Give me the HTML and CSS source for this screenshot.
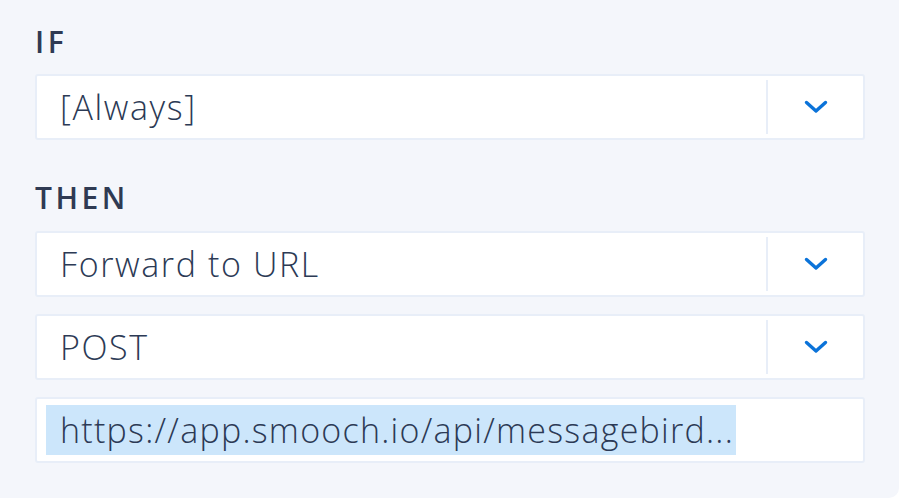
FILE: index.html
```html
<!DOCTYPE html>
<html>
<head>
<meta charset="utf-8">
<link rel="stylesheet" href="styles.css">
</head>
<body>
<div class="panel">
  <div class="label">IF</div>
  <div class="select">
    <div class="value">[Always]</div>
    <div class="arrow"><svg width="24" height="14" viewBox="0 0 24 14"><path d="M2.5 2.5 L12 11 L21.5 2.5" fill="none" stroke="#0b73d9" stroke-width="3.4" stroke-linecap="round" stroke-linejoin="round"/></svg></div>
  </div>
  <div class="label then">THEN</div>
  <div class="select">
    <div class="value">Forward to URL</div>
    <div class="arrow"><svg width="24" height="14" viewBox="0 0 24 14"><path d="M2.5 2.5 L12 11 L21.5 2.5" fill="none" stroke="#0b73d9" stroke-width="3.4" stroke-linecap="round" stroke-linejoin="round"/></svg></div>
  </div>
  <div class="select">
    <div class="value">POST</div>
    <div class="arrow"><svg width="24" height="14" viewBox="0 0 24 14"><path d="M2.5 2.5 L12 11 L21.5 2.5" fill="none" stroke="#0b73d9" stroke-width="3.4" stroke-linecap="round" stroke-linejoin="round"/></svg></div>
  </div>
  <div class="input">
    <span class="sel">https://app.smooch.io/api/messagebird...</span>
  </div>
</div>
</body>
</html>
```
FILE: styles.css
```css
html, body { margin: 0; padding: 0; background: #ffffff; }
body { width: 900px; height: 500px; overflow: hidden; }
.panel {
  width: 899px;
  height: 498px;
  box-sizing: border-box;
  background: #f4f6fb;
  border-bottom-right-radius: 10px;
  padding: 25px 35px 0 35px;
  font-family: "Open Sans", Lato, sans-serif;
  color: #2c3a55;
  display: flex;
  flex-direction: column;
}
.label {
  font-size: 30px;
  font-weight: 600;
  letter-spacing: 3.5px;
  line-height: 34px;
  height: 34px;
  margin-bottom: 15px;
  color: #2f3a53;
}
.label.then { margin-top: 24px; margin-bottom: 16px; }
.select, .input {
  width: 830px;
  height: 66px;
  box-sizing: border-box;
  background: #ffffff;
  border: 2px solid #e8eef8;
  border-radius: 3px;
  display: flex;
  align-items: center;
  margin-bottom: 17px;
}
.value {
  flex: 1;
  padding-left: 23px;
  font-size: 34px;
  font-weight: 350;
  letter-spacing: 1.6px;
  line-height: 40px;
}
.arrow {
  width: 97px;
  height: 54px;
  border-left: 2px solid #e8eef8;
  display: flex;
  align-items: center;
  justify-content: center;
  box-sizing: border-box;
}
.arrow svg { display: block; }
.input { padding-left: 9px; }
.sel {
  background: #cce6fb;
  font-size: 34px;
  font-weight: 350;
  letter-spacing: 1.25px;
  line-height: 50px;
  height: 50px;
  padding: 0 2px 0 14px;
}
```
